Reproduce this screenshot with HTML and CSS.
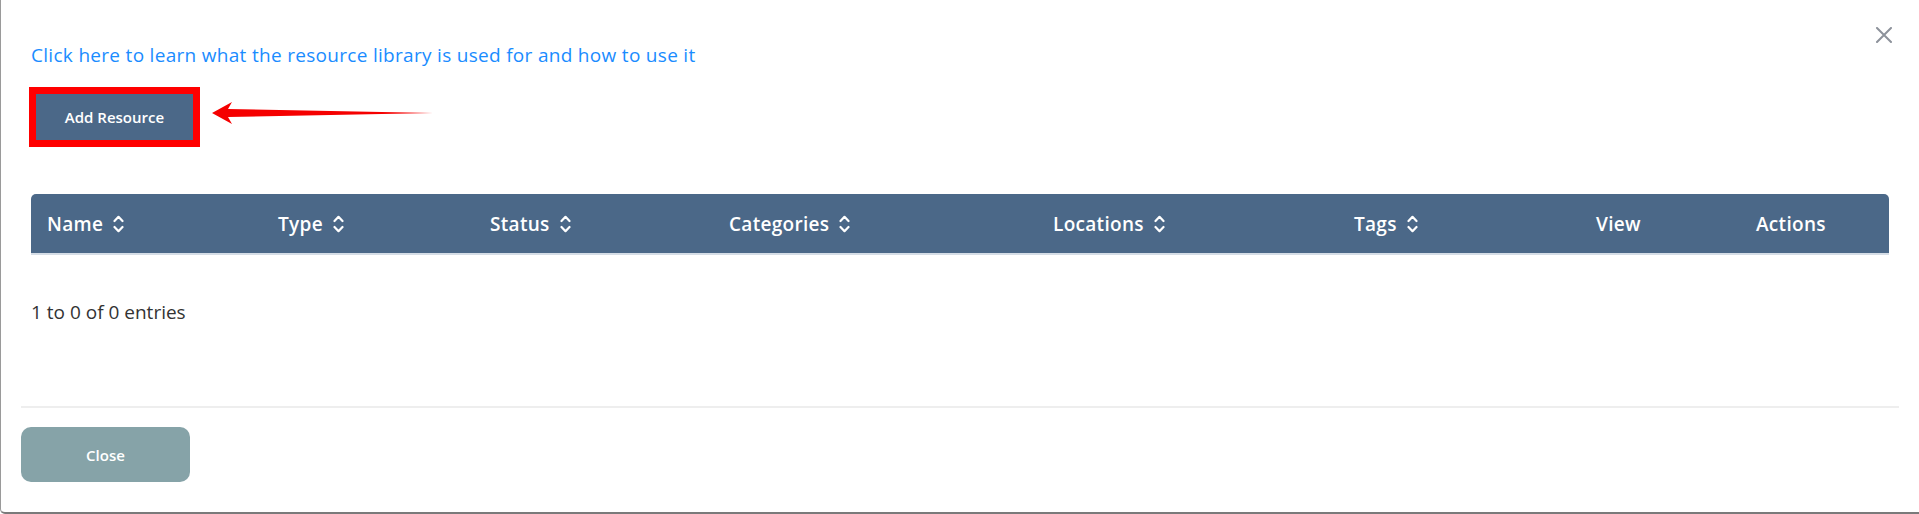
FILE: index.html
```html
<!DOCTYPE html>
<html lang="en">
   <head>
      <meta charset="UTF-8">
      <meta name="viewport" content="width=device-width, initial-scale=1.0">
      <title>Resource Library</title>
      <link rel="stylesheet" href="styles.css">
   </head>
   <body>
      <div class="modal">
         <button class="modal-close" aria-label="Close">
            <svg width="18" height="16" viewBox="0 0 18 16">
               <path d="M2 1 L16 15 M16 1 L2 15" stroke="#8d929b" stroke-width="2" stroke-linecap="round"/>
            </svg>
         </button>
         <div class="modal-body">
            <a class="help-link" href="#">Click here to learn what the resource library is used for and how to use it</a>
            <div class="add-row">
               <div class="highlight">
                  <button class="add-btn">Add Resource</button>
               </div>
               <svg class="arrow" width="222" height="22" viewBox="0 0 222 22">
                  <polygon points="0,11 20,0 16,7 221,11 16,15 20,22" fill="#f50000"/>
               </svg>
            </div>
            <div class="table-head">
               <div class="col">Name <span class="sort"></span></div>
               <div class="col">Type <span class="sort"></span></div>
               <div class="col">Status <span class="sort"></span></div>
               <div class="col">Categories <span class="sort"></span></div>
               <div class="col">Locations <span class="sort"></span></div>
               <div class="col">Tags <span class="sort"></span></div>
               <div class="col">View</div>
               <div class="col">Actions</div>
            </div>
            <p class="entries">1 to 0 of 0 entries</p>
         </div>
         <div class="modal-footer">
            <button class="close-btn">Close</button>
         </div>
      </div>
      <script>
         // drop the same up/down chevrons into every sortable column
         var sortIcon = '<svg width="11" height="22" viewBox="0 0 11 22">' +
            '<polyline points="1.5,8 5.5,3.8 9.5,8" fill="none" stroke="#fff" stroke-width="2.2" stroke-linecap="round" stroke-linejoin="round"/>' +
            '<polyline points="1.5,14 5.5,18.2 9.5,14" fill="none" stroke="#fff" stroke-width="2.2" stroke-linecap="round" stroke-linejoin="round"/>' +
            '</svg>';
         document.querySelectorAll(".sort").forEach(function (el) {
            el.innerHTML = sortIcon;
         });
      </script>
   </body>
</html>
```

FILE: styles.css
```css
body {
font-family: "Open Sans", Lato, Arial, sans-serif;
margin: 0;
padding: 0;
background-color: #fff;
color: #333;
}
.modal {
position: relative;
height: 514px;
box-sizing: border-box;
display: flex;
flex-direction: column;
border-left: 1px solid #9a9a9a;
border-bottom: 2px solid #7a7a7a;
border-bottom-left-radius: 5px;
background-color: #fff;
}
.modal-close {
position: absolute;
top: 27px;
right: 26px;
padding: 0;
border: none;
background: none;
cursor: pointer;
line-height: 0;
}
.modal-body {
flex: 1;
padding: 44px 30px 0 30px;
}
.help-link {
display: block;
font-size: 19px;
line-height: 22px;
letter-spacing: .3px;
color: #1a8cff;
text-decoration: none;
}
.add-row {
display: flex;
align-items: center;
gap: 12px;
margin-top: 21px;
margin-left: -2px;
}
.highlight {
border: 7px solid #ff0000;
line-height: 0;
}
.add-btn {
width: 157px;
height: 46px;
border: none;
background-color: #4b6888;
color: #fff;
font-family: inherit;
font-size: 15px;
font-weight: 600;
cursor: pointer;
}
.arrow {
margin-top: -8px;
}
.table-head {
display: grid;
grid-template-columns: 231px 212px 239px 324px 301px 242px 160px 1fr;
align-items: center;
height: 59px;
margin-top: 47px;
background-color: #4b6888;
border-radius: 5px 5px 0 0;
border-bottom: 2px solid #d5dde6;
color: #fff;
font-size: 19px;
font-weight: 600;
letter-spacing: .3px;
}
.col {
display: flex;
align-items: center;
gap: 10px;
padding-left: 16px;
}
.sort {
display: flex;
}
.entries {
margin: 46px 0 0;
font-size: 19px;
line-height: 22px;
font-weight: 400;
color: #333;
}
.modal-footer {
margin: 0 20px;
padding: 19px 0 30px;
border-top: 2px solid #eeeeee;
}
.close-btn {
width: 169px;
height: 55px;
border: none;
border-radius: 10px;
background-color: #86a3a8;
color: #fff;
font-family: inherit;
font-size: 15px;
font-weight: 600;
cursor: pointer;
}
```
